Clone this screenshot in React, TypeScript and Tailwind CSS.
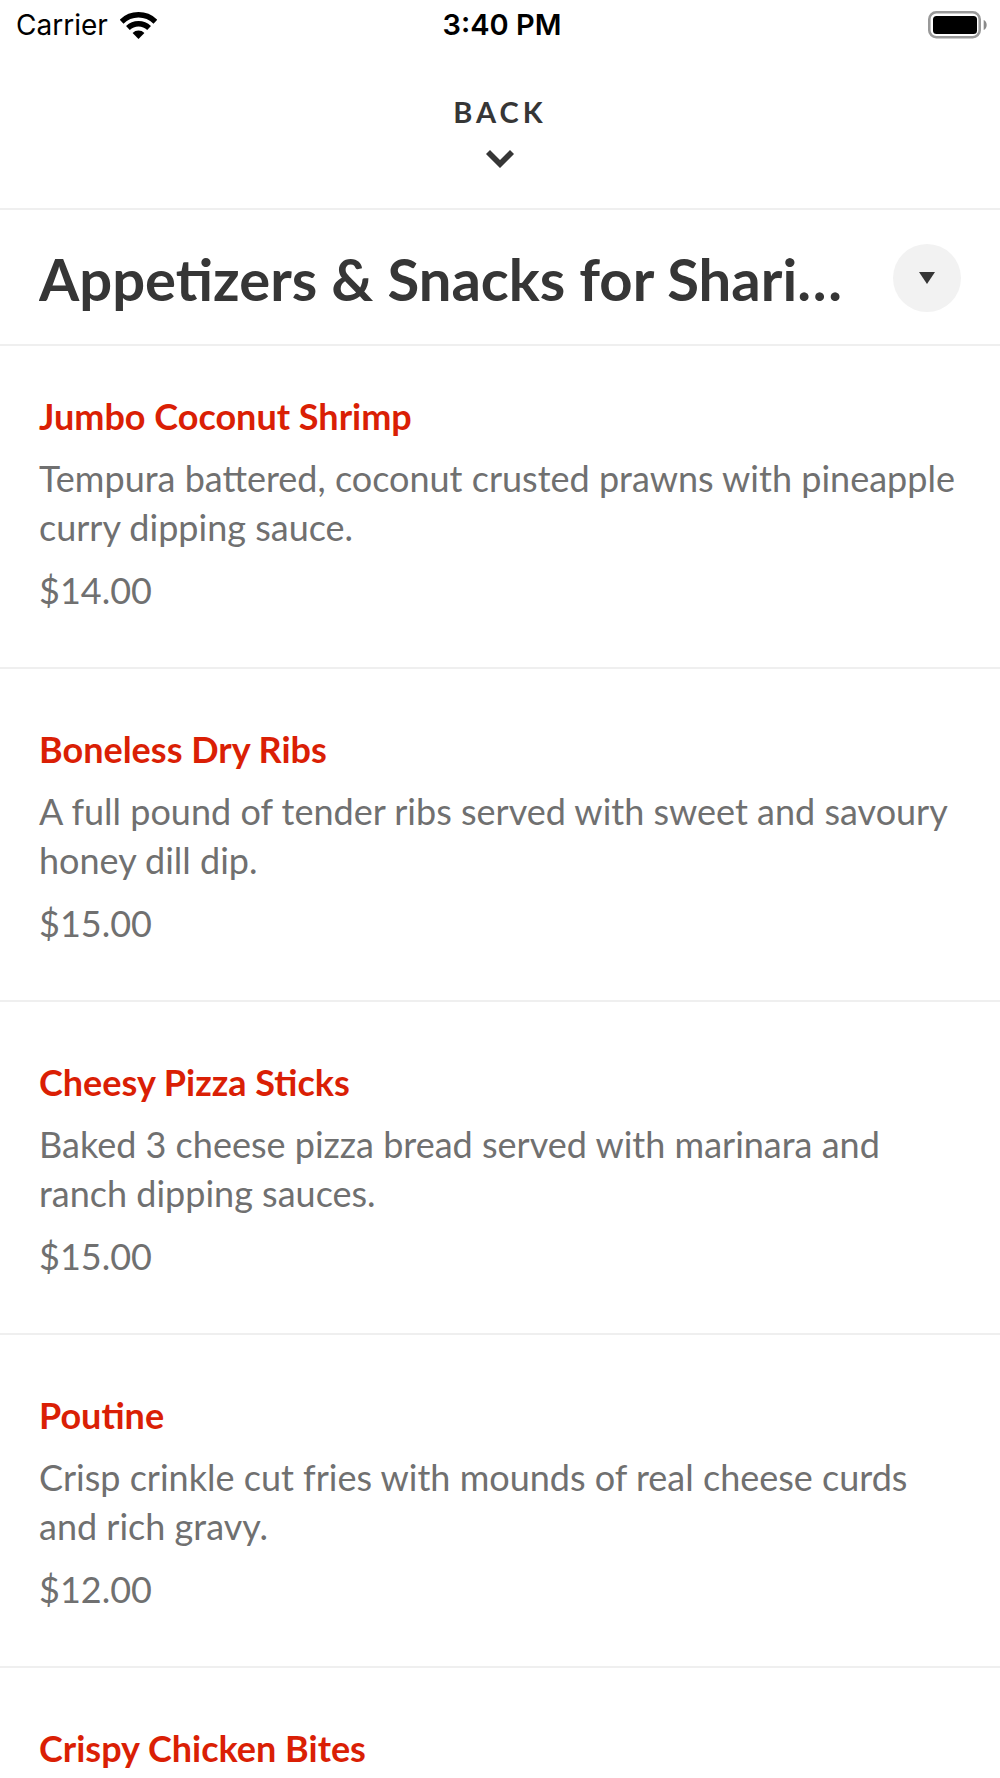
type MenuItem = {
    name: string;
    description?: string;
    price?: string;
};

const items: MenuItem[] = [
    { name: 'Jumbo Coconut Shrimp', description: 'Tempura battered, coconut crusted prawns with pineapple curry dipping sauce.', price: '$14.00' },
    { name: 'Boneless Dry Ribs', description: 'A full pound of tender ribs served with sweet and savoury honey dill dip.', price: '$15.00' },
    { name: 'Cheesy Pizza Sticks', description: 'Baked 3 cheese pizza bread served with marinara and ranch dipping sauces.', price: '$15.00' },
    { name: 'Poutine', description: 'Crisp crinkle cut fries with mounds of real cheese curds and rich gravy.', price: '$12.00' },
    { name: 'Crispy Chicken Bites' },
];

function StatusBar() {
    return (
        <div className="flex h-[50px] items-center pr-3 pl-4 font-['Inter',sans-serif] text-[28px] text-black">
            <div className="flex flex-1 items-center gap-3">
                <span>Carrier</span>
                <svg viewBox="0 0 37 27" className="h-[27px] w-[37px]" fill="none" stroke="#000" strokeWidth="5.4">
                    <path d="M1.600 9.700A24.200 24.200 0 0 1 35.400 9.700" />
                    <path d="M7.900 16A15.300 15.300 0 0 1 29.100 16" />
                    <path d="M18.500 27l-5.900-6.100a8.500 8.500 0 0 1 11.800 0z" fill="#000" stroke="none" />
                </svg>
            </div>
            <span className="text-[29px] font-semibold">3:40 PM</span>
            <div className="flex flex-1 justify-end">
                <svg viewBox="0 0 60 28" className="h-7 w-[60px]">
                    <rect x="1.300" y="1.300" width="50.400" height="24.900" rx="7" fill="none" stroke="#999" strokeWidth="2.600" />
                    <rect x="5" y="5" width="44" height="18" rx="3.500" />
                    <path d="M55.700 9c4 1.500 4 8.500 0 10z" fill="#8a8a8a" />
                </svg>
            </div>
        </div>
    );
}

export default function App() {
    return (
        <div className="min-h-screen bg-white font-['Lato',sans-serif] text-[#363636]">
            <StatusBar />
            <header className="flex justify-center border-b-2 border-[#efefef] py-10">
                <button type="button" className="flex flex-col items-center gap-4">
                    <span className="text-[29px] leading-[44px] font-bold tracking-[4px]">BACK</span>
                    <svg viewBox="0 0 28 18" className="h-[18px] w-7">
                        <path d="M0 4l4-4 10 10L24 0l4 4-14 14z" fill="currentColor" />
                    </svg>
                </button>
            </header>
            <div className="flex h-[136px] items-center justify-between gap-10 border-b-2 border-[#efefef] px-[39px] pt-0.5">
                <h1 className="truncate pt-0.5 text-[58px] leading-[80px] font-bold">Appetizers &amp; Snacks for Sharing</h1>
                <button type="button" aria-label="Choose menu section" className="flex size-[68px] shrink-0 items-center justify-center rounded-full bg-[#f2f2f2]">
                    <svg viewBox="0 0 16 12" className="h-3 w-4">
                        <path d="M0 0h16L8 12z" fill="currentColor" />
                    </svg>
                </button>
            </div>
            <ul>
                {items.map((item) => (
                    <li key={item.name} className="border-b-2 border-[#efefef] px-[39px] pt-14 pb-[53px] first:pt-[46px] last:border-b-0 last:pb-0">
                        <h2 className="text-[36px] leading-[48px] font-bold text-[#da1f05]">{item.name}</h2>
                        {item.description && <p className="mt-[14px] text-[36px] leading-[49px] text-[#707070]">{item.description}</p>}
                        {item.price && <p className="mt-[14px] text-[36px] leading-[48px] text-[#707070]">{item.price}</p>}
                    </li>
                ))}
            </ul>
        </div>
    );
}
